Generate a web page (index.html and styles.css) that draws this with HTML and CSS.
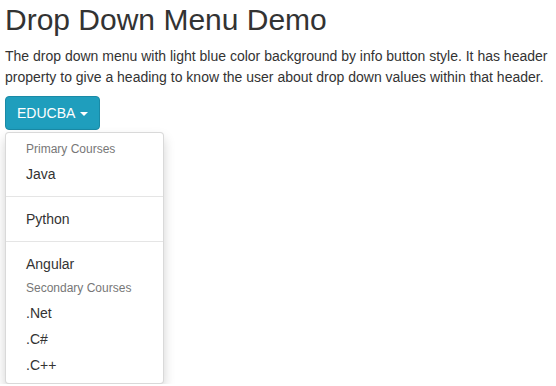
FILE: index.html
```html
<!DOCTYPE html>
<html>
<head>
<meta charset="utf-8">
<link rel="stylesheet" href="styles.css">
</head>
<body>
<div class="page">
  <h2 class="title">Drop Down Menu Demo</h2>
  <p class="intro">The drop down menu with light blue color background by info button style. It has header property to give a heading to know the user about drop down values within that header.</p>
  <div class="dropdown">
    <button class="btn-info" type="button">EDUCBA <span class="caret"></span></button>
    <ul class="dd-list">
      <li class="dd-header">Primary Courses</li>
      <li class="dd-item">Java</li>
      <li class="dd-divider"></li>
      <li class="dd-item">Python</li>
      <li class="dd-divider"></li>
      <li class="dd-item">Angular</li>
      <li class="dd-header">Secondary Courses</li>
      <li class="dd-item">.Net</li>
      <li class="dd-item">.C#</li>
      <li class="dd-item">.C++</li>
    </ul>
  </div>
</div>
</body>
</html>
```

FILE: styles.css
```css
html, body {
  margin: 0;
  padding: 0;
  background: #fff;
}
body {
  font-family: "Liberation Sans", Arial, Helvetica, sans-serif;
  font-size: 14px;
  line-height: 20px;
  color: #333;
}
.page {
  padding: 3px 5px 0 5px;
}
.title {
  margin: 0 0 10px 0;
  font-size: 30px;
  font-weight: 400;
  line-height: 33px;
  color: #333;
}
.intro {
  margin: 0 0 8px 0;
  line-height: 21px;
}
.dropdown {
  display: flex;
  flex-direction: column;
  align-items: flex-start;
}
.btn-info {
  display: inline-block;
  font-family: inherit;
  font-size: 14px;
  line-height: 20px;
  padding: 6px 11px;
  color: #fff;
  background: #1f9ebd;
  border: 1px solid #1a8aa6;
  border-radius: 4px;
  cursor: pointer;
}
.caret {
  display: inline-block;
  width: 0;
  height: 0;
  margin-left: 2px;
  vertical-align: middle;
  border-top: 4px solid #fff;
  border-left: 4px solid transparent;
  border-right: 4px solid transparent;
}
.dd-list {
  display: block;
  margin: 2px 0 0 0;
  width: 159px;
  box-sizing: border-box;
  padding: 5px 0;
  list-style: none;
  background: #fff;
  border: 1px solid rgba(0,0,0,.15);
  border-radius: 4px;
  box-shadow: 0 6px 12px rgba(0,0,0,.175);
}
.dd-header {
  padding: 3px 20px;
  font-size: 12px;
  line-height: 17px;
  color: #777;
  white-space: nowrap;
}
.dd-item {
  padding: 3px 20px;
  line-height: 20px;
  color: #333;
  white-space: nowrap;
}
.dd-divider {
  height: 1px;
  margin: 9px 0;
  background: #e5e5e5;
}
```
